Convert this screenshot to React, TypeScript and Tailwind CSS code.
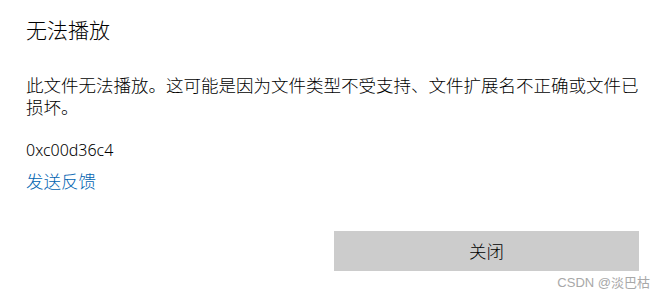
const App = () => {
  return (
    <div
      className="relative w-[665px] h-[299px] bg-white text-black overflow-hidden font-light"
      style={{ fontFamily: '"Noto Sans", "Noto Sans CJK SC", sans-serif' }}
    >
      <div className="flex flex-col pl-[26px] pt-[16px]">
        <h1 className="text-[21px] leading-[28px] font-light">无法播放</h1>
        <p className="mt-[30px] w-[614px] text-[17.5px] leading-[22px]">
          此文件无法播放。这可能是因为文件类型不受支持、文件扩展名不正确或文件已损坏。
        </p>
        <div className="mt-[20px] text-[16px] leading-[24px]">0xc00d36c4</div>
        <a className="mt-[7px] text-[17.5px] leading-[24px] text-[#0063b1] cursor-pointer">
          发送反馈
        </a>
      </div>
      <div className="flex justify-end pr-[26px] mt-[38px]">
        <button className="w-[305px] h-[40px] bg-[#cccccc] text-[17.5px] text-black font-light">
          关闭
        </button>
      </div>
      <span
        className="absolute right-[15px] bottom-[8px] text-[13px] leading-[16px] text-[#a8a8a8] font-normal"
        style={{ fontFamily: '"Liberation Sans", "Noto Sans CJK SC", sans-serif' }}
      >
        CSDN @淡巴枯
      </span>
    </div>
  );
};

export default App;
